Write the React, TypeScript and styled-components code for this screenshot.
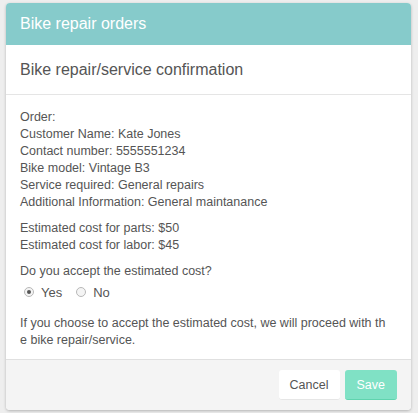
import styled, { createGlobalStyle } from 'styled-components';

const GlobalStyle = createGlobalStyle`
  html, body {
    margin: 0;
    padding: 0;
    background: #eeeeee;
    font-family: 'Liberation Sans', Arial, sans-serif;
  }
`;

const Page = styled.div`
  padding: 3px 7px 6px 6px;
`;

const Card = styled.div`
  background: #ffffff;
  border-radius: 4px;
  overflow: hidden;
  box-shadow: 0 1px 3px rgba(0, 0, 0, 0.25);
`;

const Header = styled.div`
  height: 42px;
  background: #86cbcb;
  display: flex;
  align-items: center;
  padding: 0 14px;
  color: #ffffff;
  font-size: 16px;
`;

const SubHeader = styled.div`
  height: 50px;
  display: flex;
  align-items: center;
  padding: 0 14px;
  color: #555555;
  font-size: 16px;
  border-bottom: 1px solid #e5e5e5;
  box-sizing: border-box;
`;

const Body = styled.div`
  padding: 14px 14px 10px;
  color: #555555;
  font-size: 12.5px;
  line-height: 17px;
  display: flex;
  flex-direction: column;
  gap: 9px;
`;

const Block = styled.div`
  display: flex;
  flex-direction: column;
  white-space: nowrap;
`;

const RadioRow = styled.div`
  display: flex;
  align-items: center;
  gap: 14px;
  padding-left: 4px;
  height: 24px;
  margin-bottom: 2px;
`;

const RadioLabel = styled.label`
  display: flex;
  align-items: center;
  gap: 7px;
  font-size: 13px;
`;

const Radio = styled.span<{ checked?: boolean }>`
  width: 10px;
  height: 10px;
  border-radius: 50%;
  border: 1px solid #b8b8b8;
  background: #f4f4f4;
  box-sizing: border-box;
  display: flex;
  align-items: center;
  justify-content: center;
  &::after {
    content: '';
    width: 4px;
    height: 4px;
    border-radius: 50%;
    background: ${(p) => (p.checked ? '#555555' : 'transparent')};
  }
`;

const Footer = styled.div`
  background: #f4f4f4;
  border-top: 1px solid #e0e0e0;
  height: 51px;
  display: flex;
  justify-content: flex-end;
  align-items: flex-start;
  gap: 5px;
  padding: 10px 14px 0;
  box-sizing: border-box;
`;

const Button = styled.button<{ primary?: boolean }>`
  height: 30px;
  border: none;
  border-radius: 3px;
  font-family: 'Liberation Sans', Arial, sans-serif;
  font-size: 12.5px;
  padding: 0 ${(p) => (p.primary ? '12px' : '11px')};
  cursor: pointer;
  background: ${(p) => (p.primary ? '#80e1c5' : '#ffffff')};
  color: ${(p) => (p.primary ? '#ffffff' : '#555555')};
  border-bottom: ${(p) => (p.primary ? '1px solid #5fd4ae' : '1px solid #e6e6e6')};
`;

export default function App() {
  return (
    <Page>
      <GlobalStyle />
      <Card>
        <Header>Bike repair orders</Header>
        <SubHeader>Bike repair/service confirmation</SubHeader>
        <Body>
          <Block>
            <span>Order:</span>
            <span>Customer Name: Kate Jones</span>
            <span>Contact number: 5555551234</span>
            <span>Bike model: Vintage B3</span>
            <span>Service required: General repairs</span>
            <span>Additional Information: General maintanance</span>
          </Block>
          <Block>
            <span>Estimated cost for parts: $50</span>
            <span>Estimated cost for labor: $45</span>
          </Block>
          <Block>
            <span>Do you accept the estimated cost?</span>
            <RadioRow>
              <RadioLabel>
                <Radio checked />
                Yes
              </RadioLabel>
              <RadioLabel>
                <Radio />
                No
              </RadioLabel>
            </RadioRow>
          </Block>
          <Block>
            <span>If you choose to accept the estimated cost, we will proceed with th</span>
            <span>e bike repair/service.</span>
          </Block>
        </Body>
        <Footer>
          <Button>Cancel</Button>
          <Button primary>Save</Button>
        </Footer>
      </Card>
    </Page>
  );
}
